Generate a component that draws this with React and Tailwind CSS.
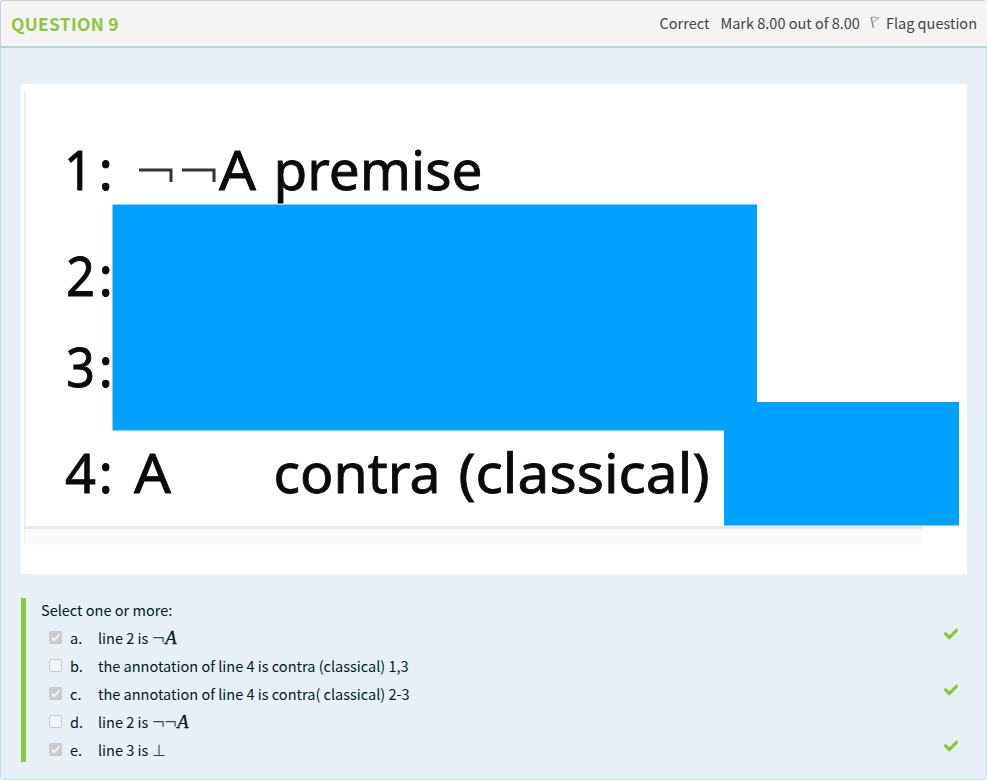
import { FaCheck } from "react-icons/fa";

const options = [
  { id: "a", checked: true, text: "line 2 is", math: "¬A" },
  { id: "b", checked: false, text: "the annotation of line 4 is contra (classical) 1,3" },
  { id: "c", checked: true, text: "the annotation of line 4 is contra( classical) 2-3" },
  { id: "d", checked: false, text: "line 2 is", math: "¬¬A" },
  { id: "e", checked: true, text: "line 3 is", math: "⊥" },
];

function Formula({ value }) {
  return (
    <span className="ml-[4px] inline-flex items-baseline">
      {[...value].map((ch, i) =>
        ch === "A" ? (
          <span key={i} className="ml-px font-['Liberation_Serif',serif] text-[18.5px] leading-none italic [-webkit-text-stroke:0.3px_#001a1e]">A</span>
        ) : ch === "¬" ? (
          <span key={i} className="relative top-px inline-block w-[12px] font-['Liberation_Serif',serif] text-[22px] leading-none text-[#33474b]">¬</span>
        ) : (
          <span key={i} className="font-['DejaVu_Sans_Light','DejaVu_Sans',sans-serif] text-[16px] leading-none font-extralight text-[#33474b]">⊥</span>
        )
      )}
    </span>
  );
}

function Checkbox({ checked }) {
  return (
    <span
      className={
        checked
          ? "mt-[-1px] flex h-[13px] w-[13px] items-center justify-center rounded-[2px] bg-[#cbcccd]"
          : "mt-[-1px] block h-[13px] w-[13px] rounded-[2px] border border-[#c9cdd0] bg-[#f0f3f5]"
      }
    >
      {checked && (
        <svg viewBox="0 0 13 13" className="h-[13px] w-[13px]" fill="none" stroke="#f2f4f5" strokeWidth="2">
          <path d="M2.6 6.8 5.2 9.4 10.6 3.2" />
        </svg>
      )}
    </span>
  );
}

function ProofImage() {
  return (
    <svg
      viewBox="21 84 946 490"
      className="block h-[490px] w-[946px] bg-white font-['Noto_Sans',sans-serif] text-[54px]"
      fill="#0a0a0a"
    >
      <rect x="24" y="91" width="2" height="453" fill="#efefef" />
      <rect x="25" y="528" width="897" height="16.5" fill="#fafafa" />
      <rect x="24" y="526" width="898" height="3" fill="#e9e9e9" />
      <path d="M112.5 204.5H757V402H959V525.5H724V430.5H112.5Z" fill="#00a1ff" />
      <path d="M139 170H171V182M182 170H214V182" fill="none" stroke="#333" strokeWidth="3" />
      <g stroke="#0a0a0a" strokeWidth="0.8">
        <text x="64" y="190" textLength="29" lengthAdjust="spacingAndGlyphs">1</text>
        <text x="66" y="296" textLength="29" lengthAdjust="spacingAndGlyphs">2</text>
        <text x="66" y="387" textLength="29" lengthAdjust="spacingAndGlyphs">3</text>
        <text x="65" y="493" textLength="31" lengthAdjust="spacingAndGlyphs">4</text>
        <text x="98.5" y="190">:</text>
        <text x="98.5" y="296">:</text>
        <text x="98.5" y="387">:</text>
        <text x="98.5" y="493">:</text>
        <text x="219" y="190" textLength="37" lengthAdjust="spacingAndGlyphs">A</text>
        <text x="273.5" y="190" textLength="209" lengthAdjust="spacingAndGlyphs">premise</text>
        <text x="134" y="493" textLength="37" lengthAdjust="spacingAndGlyphs">A</text>
        <text x="273.5" y="493" textLength="167" lengthAdjust="spacingAndGlyphs">contra</text>
        <text x="458.5" y="493" textLength="251" lengthAdjust="spacingAndGlyphs">(classical)</text>
      </g>
    </svg>
  );
}

export default function App() {
  return (
    <div className="flex h-[780px] w-[987px] flex-col overflow-hidden bg-white font-['Noto_Sans_CJK_SC',sans-serif]">
      <header className="flex h-[47px] shrink-0 items-center justify-between rounded-t-[3px] border border-r-0 border-[#c5d0dc] bg-[#f4f4f4] pr-[10px] pl-[10px] text-[#444]">
        <h2 className="pt-[2px] text-[17.4px] font-bold tracking-[0.3px] text-[#8ec63f]">QUESTION 9</h2>
        <div className="flex items-center pb-[2px] text-[14.5px]">
          <span className="mr-[11px]">Correct</span>
          <span className="mr-[10px]">Mark 8.00 out of 8.00</span>
          <svg viewBox="0 0 10 13" className="mr-[6px] h-[13px] w-[10px]" fill="none" stroke="#999">
            <path d="M1 1 3.5 12" strokeWidth="1.6" />
            <path d="M1.5 1.5C4 .5 6 2 9 1.8C7 4 5 3.5 3 6.5" strokeWidth="1" />
          </svg>
          <span>Flag question</span>
        </div>
      </header>
      <main className="flex flex-1 flex-col rounded-b-[4px] border border-[#bcdfeb] border-t-[#b8d2dc] bg-[#e7f0f6] pt-[36px] pl-[20px] text-[14.53px] text-[#001a1e]">
        <ProofImage />
        <section className="mt-[24px] h-[164px] w-[946px] border-l-[5px] border-[#8ec63f] pl-[15px]">
          <p className="h-[26px] leading-[23px]">Select one or more:</p>
          {options.map((o) => (
            <div key={o.id} className="flex h-[28px] items-center pr-[9px] pl-[8px] leading-[28px]">
              <Checkbox checked={o.checked} />
              <span className="ml-[8px] w-[28px]">{o.id}.</span>
              <span className="whitespace-nowrap">
                {o.text}
                {o.math && <Formula value={o.math} />}
              </span>
              {o.checked && (
                <FaCheck className="mt-[-8px] ml-auto h-[14px] w-[14px] text-[#8ec63f]" stroke="#8ec63f" strokeWidth="24" />
              )}
            </div>
          ))}
        </section>
      </main>
    </div>
  );
}
